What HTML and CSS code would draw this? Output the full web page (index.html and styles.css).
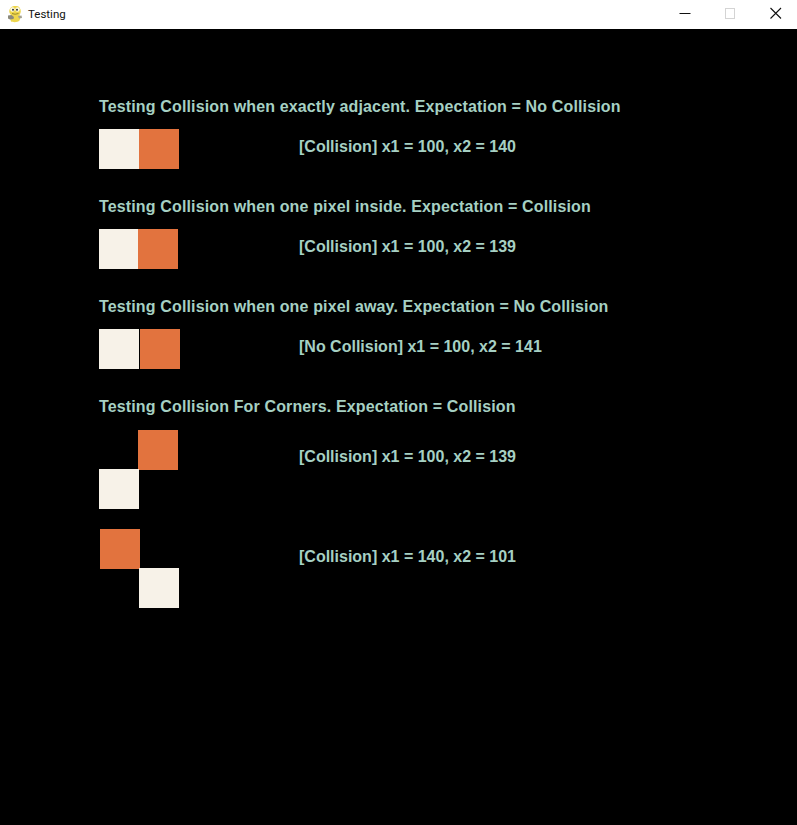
FILE: index.html
```html
<!DOCTYPE html>
<html lang="en">
<head>
    <meta charset="UTF-8">
    <meta name="viewport" content="width=device-width, initial-scale=1.0">
    <title>Testing</title>
    <link rel="stylesheet" href="styles.css">
</head>
<body>
    <div class="titlebar">
        <div class="title">
            <svg class="app-icon" width="16" height="18" viewBox="0 0 16 18">
                <path d="M3.500 3 C5 .5 11 .5 12.500 2.500 C14.500 5 14 8 12.500 10 L13.500 12 L12.500 15.500 C11 17.500 6 17.500 4 16.500 L3 13 L4 10 C1.500 7.500 2 4.500 3.500 3 Z" fill="#eed64c"/>
                <path d="M1 10.500 L4.500 10 L7 12 L6.500 14 L3 14.500 L1 13.500 Z" fill="#8b897c"/>
                <path d="M11 11 L14.500 10.500 L15 13 L12 13.500 Z" fill="#a5a394"/>
                <circle cx="5.500" cy="4.500" r="2.200" fill="#fdfbe8"/>
                <circle cx="10.500" cy="4.500" r="2.200" fill="#fdfbe8"/>
                <circle cx="6" cy="4.800" r="1" fill="#333"/>
                <circle cx="10" cy="4.800" r="1" fill="#333"/>
                <path d="M5 8.500 Q8 10 11.500 8.500" stroke="#9c8a2a" fill="none"/>
            </svg>
            <span>Testing</span>
        </div>
        <div class="window-buttons">
            <svg class="win-btn" width="45" height="28" viewBox="0 0 45 28"><path d="M17.500 13.500 H28.500" stroke="#111"/></svg>
            <svg class="win-btn" width="45" height="28" viewBox="0 0 45 28"><rect x="18.500" y="8.500" width="9" height="10" fill="none" stroke="#d4d4d4"/></svg>
            <svg class="win-btn" width="45" height="28" viewBox="0 0 45 28"><path d="M18.500 8 L29 18.500 M29 8 L18.500 18.500" stroke="#111" stroke-width="1.100"/></svg>
        </div>
    </div>

    <div class="screen">
        <section class="test">
            <h2>Testing Collision when exactly adjacent. Expectation = No Collision</h2>
            <div class="row">
                <div class="pair">
                    <div class="square white" style="left: 0px; top: 0px"></div>
                    <div class="square orange" style="left: 40px; top: 0px"></div>
                </div>
                <p class="result">[Collision] x1 = 100, x2 = 140</p>
            </div>
        </section>

        <section class="test">
            <h2>Testing Collision when one pixel inside. Expectation = Collision</h2>
            <div class="row">
                <div class="pair">
                    <div class="square white" style="left: 0px; top: 0px"></div>
                    <div class="square orange" style="left: 39px; top: 0px"></div>
                </div>
                <p class="result">[Collision] x1 = 100, x2 = 139</p>
            </div>
        </section>

        <section class="test">
            <h2>Testing Collision when one pixel away. Expectation = No Collision</h2>
            <div class="row">
                <div class="pair">
                    <div class="square white" style="left: 0px; top: 0px"></div>
                    <div class="square orange" style="left: 41px; top: 0px"></div>
                </div>
                <p class="result">[No Collision] x1 = 100, x2 = 141</p>
            </div>
        </section>

        <section class="test corners">
            <h2>Testing Collision For Corners. Expectation = Collision</h2>
            <div class="row corner-row">
                <div class="pair tall">
                    <div class="square orange" style="left: 39px; top: 0px"></div>
                    <div class="square white" style="left: 0px; top: 39px"></div>
                </div>
                <p class="result">[Collision] x1 = 100, x2 = 139</p>
            </div>
            <div class="row corner-row second">
                <div class="pair tall">
                    <div class="square orange" style="left: 1px; top: 0px"></div>
                    <div class="square white" style="left: 40px; top: 39px"></div>
                </div>
                <p class="result">[Collision] x1 = 140, x2 = 101</p>
            </div>
        </section>
    </div>
</body>
</html>
```

FILE: styles.css
```css
html, body {
    margin: 0;
    padding: 0;
    background-color: #000;
}
body {
    font-family: "Liberation Sans", Arial, sans-serif;
    width: 797px;
    height: 825px;
    overflow: hidden;
}
.titlebar {
    display: flex;
    justify-content: space-between;
    height: 29px;
    background-color: #fff;
}
.title {
    display: flex;
    align-items: center;
    gap: 5px;
    padding: 0 0 2px 7px;
    font-family: Roboto, "Noto Sans", sans-serif;
    font-size: 11.5px;
    color: #111;
}
.window-buttons {
    display: flex;
}
.win-btn {
    display: block;
}
.screen {
    padding: 68px 0 0 99px;
}
.test {
    height: 100px;
}
h2 {
    margin: 0;
    font-size: 16px;
    line-height: 20px;
    font-weight: bold;
    letter-spacing: 0.14px;
    color: #a6d0c3;
}
.row {
    display: flex;
    margin-top: 12px;
}
.pair {
    position: relative;
    width: 200px;
    height: 40px;
}
.pair.tall {
    height: 79px;
}
.square {
    position: absolute;
    width: 40px;
    height: 40px;
}
.white {
    background-color: #f7f2e8;
}
.orange {
    background-color: #e2733e;
}
.result {
    margin: 8px 0 0;
    font-size: 16px;
    line-height: 20px;
    font-weight: bold;
    color: #a6d0c3;
}
.corner-row {
    margin-top: 13px;
}
.corner-row .result {
    margin-top: 17px;
}
.corner-row.second {
    margin-top: 20px;
}
.corner-row.second .result {
    margin-top: 18px;
}
```
